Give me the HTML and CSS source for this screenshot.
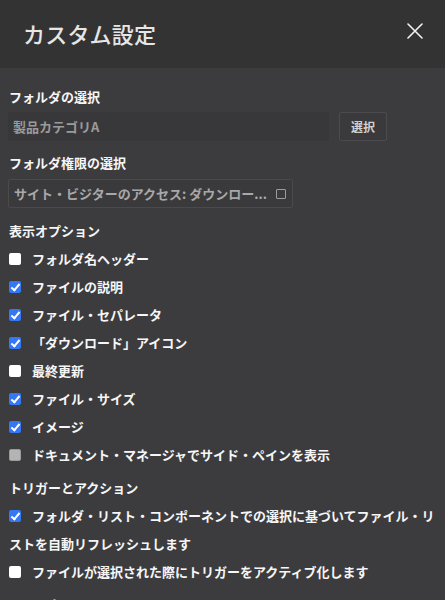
FILE: index.html
```html
<!DOCTYPE html>
<html lang="ja">
<head>
<meta charset="utf-8">
<link rel="stylesheet" href="styles.css">
</head>
<body>
<header class="header">
  <h1 class="title">カスタム設定</h1>
  <button class="close" aria-label="閉じる">
    <svg width="16" height="16" viewBox="0 0 16 16"><path d="M1 1L15 15M15 1L1 15" stroke="#f2f2f2" stroke-width="1.6" fill="none" stroke-linecap="round"/></svg>
  </button>
</header>
<main class="content">
  <div class="label">フォルダの選択</div>
  <div class="folder-row">
    <div class="input">製品カテゴリA</div>
    <button class="btn">選択</button>
  </div>
  <div class="label label-2">フォルダ権限の選択</div>
  <div class="select">
    <span class="select-text">サイト・ビジターのアクセス: ダウンロー...</span>
    <span class="select-icon"></span>
  </div>
  <div class="label label-3">表示オプション</div>
  <div class="row"><span class="cb"></span>フォルダ名ヘッダー</div>
  <div class="row"><span class="cb checked"></span>ファイルの説明</div>
  <div class="row"><span class="cb checked"></span>ファイル・セパレータ</div>
  <div class="row"><span class="cb checked"></span>「ダウンロード」アイコン</div>
  <div class="row"><span class="cb"></span>最終更新</div>
  <div class="row"><span class="cb checked"></span>ファイル・サイズ</div>
  <div class="row"><span class="cb checked"></span>イメージ</div>
  <div class="row"><span class="cb disabled"></span>ドキュメント・マネージャでサイド・ペインを表示</div>
  <div class="label label-4">トリガーとアクション</div>
  <div class="row"><span class="cb checked"></span>フォルダ・リスト・コンポーネントでの選択に基づいてファイル・リストを自動リフレッシュします</div>
  <div class="row"><span class="cb"></span>ファイルが選択された際にトリガーをアクティブ化します</div>
  <div class="label label-5">レイアウト</div>
</main>
</body>
</html>
```
FILE: styles.css
```css
html, body {
  margin: 0;
  padding: 0;
}
body {
  background: #3c3c3f;
  font-family: "Noto Sans CJK JP", "Noto Sans", sans-serif;
  color: #f4f4f4;
  width: 445px;
  height: 600px;
  overflow: hidden;
}
.header {
  height: 68px;
  background: #333334;
  display: flex;
  align-items: center;
  justify-content: space-between;
  padding: 0 21px 0 23px;
  box-sizing: border-box;
}
.title {
  margin: 0;
  font-size: 22px;
  font-weight: 500;
  color: #e6e6e6;
  letter-spacing: 0.2px;
  position: relative;
  top: -1px;
}
.close {
  background: none;
  border: 0;
  padding: 0;
  width: 18px;
  height: 18px;
  display: flex;
  align-items: center;
  justify-content: center;
  position: relative;
  top: -3px;
}
.content {
  padding: 15px 8px 0 9px;
}
.label {
  font-size: 13px;
  font-weight: 700;
  line-height: 28px;
  height: 28px;
  color: #f6f6f6;
}
.label-2 { margin-top: 8px; }
.label-3 { margin-top: 9px; }
.label-4 { margin-top: 5px; }
.label-5 { margin-top: 5px; }
.folder-row {
  display: flex;
  gap: 10px;
  margin-top: 1px;
  margin-left: -1px;
}
.input {
  width: 321px;
  height: 29px;
  box-sizing: border-box;
  background: #38383b;
  color: #9b9b9b;
  font-size: 13px;
  font-weight: 600;
  line-height: 29px;
  padding-left: 5px;
}
.btn {
  width: 48px;
  height: 29px;
  background: #3a3a3d;
  border: 1px solid #4b4b4e;
  border-radius: 2px;
  color: #d0d0d0;
  font-family: inherit;
  font-size: 12px;
  font-weight: 600;
  padding: 0;
}
.select {
  width: 285px;
  height: 29px;
  box-sizing: border-box;
  margin-top: 2px;
  margin-left: -1px;
  border: 1px solid #4a4a4d;
  background: #3a3a3d;
  display: flex;
  align-items: center;
  justify-content: space-between;
  padding: 0 6px 0 5px;
  border-radius: 2px;
}
.select-text {
  color: #a8a8a8;
  font-size: 13px;
  font-weight: 600;
}
.select-icon {
  width: 8px;
  height: 8px;
  border: 1.5px solid #9c9c9c;
  border-radius: 1px;
}
.row {
  font-size: 13px;
  font-weight: 700;
  line-height: 28px;
  color: #f6f6f6;
}
.cb {
  display: inline-block;
  width: 12px;
  height: 12px;
  box-sizing: border-box;
  border-radius: 2px;
  background: #ffffff;
  vertical-align: -1px;
  margin-right: 11px;
  position: relative;
}
.cb.checked {
  background: #3478f6;
}
.cb.checked::after {
  content: "";
  position: absolute;
  left: 4px;
  top: 1px;
  width: 3px;
  height: 7px;
  border: solid #ffffff;
  border-width: 0 2px 2px 0;
  transform: rotate(40deg);
}
.cb.disabled {
  background: #b4b4b4;
  border: 1px solid #9a9a9a;
}
```
